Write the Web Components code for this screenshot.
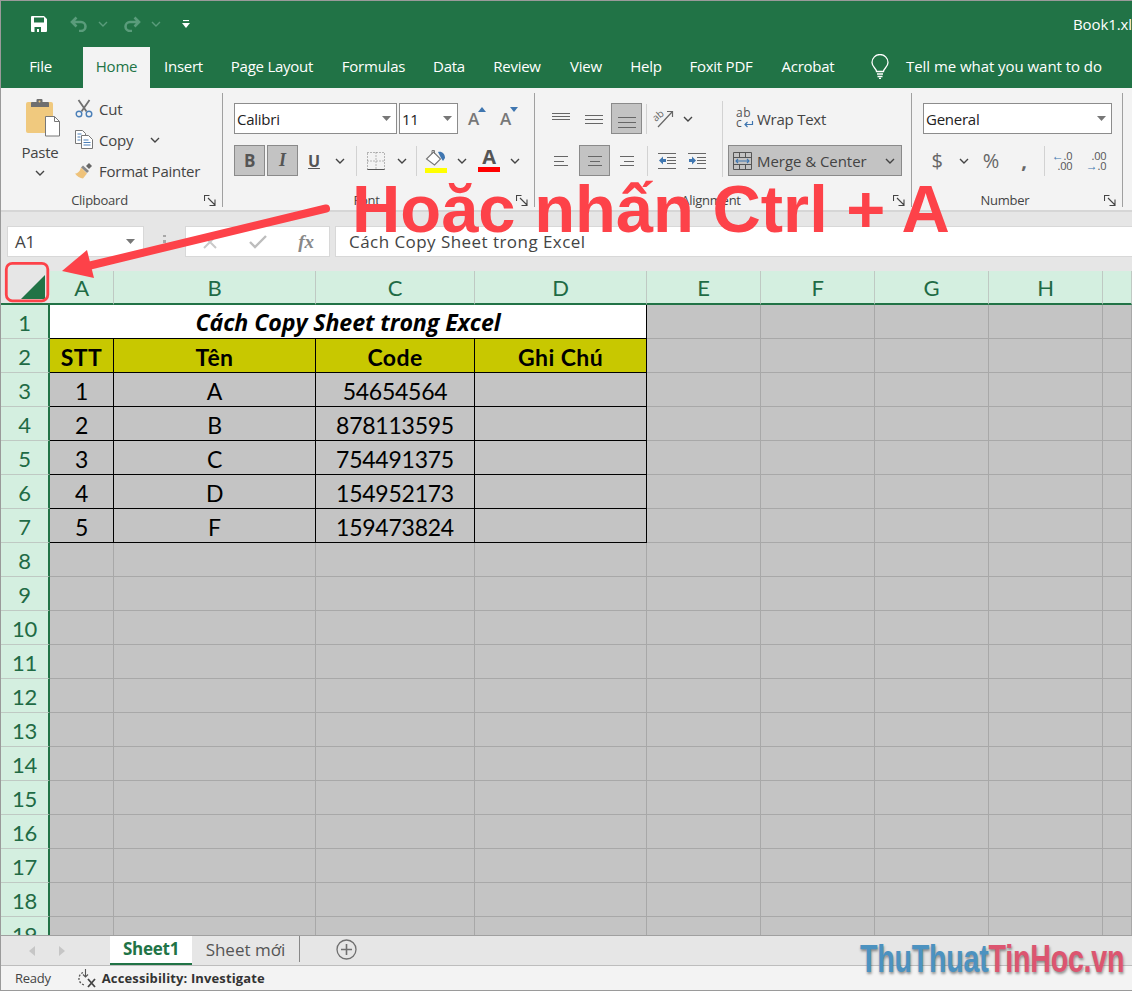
<!DOCTYPE html>
<html lang="vi"><head><meta charset="utf-8"><title>Book1</title>
<style>html,body{margin:0;padding:0;background:#f3f3f3}</style></head><body>
<x-app></x-app>
<script>
const chev=(c='#444')=>`<svg width="10" height="6" viewBox="0 0 10 6"><path d="M1 1l4 4 4-4" fill="none" stroke="${c}" stroke-width="1.4"/></svg>`;
const caret=`<svg width="9" height="5" viewBox="0 0 9 5"><path d="M0 0h9L4.500 5z" fill="#777"/></svg>`;
const launcher=`<svg width="12" height="11" viewBox="0 0 12 11"><path d="M.5 0v6M.5.5h5M4 3l7 7M11 4.500v6H5.500" fill="none" stroke="#444" stroke-width="1.1"/></svg>`;
const lines=(ys,x0,w)=>`<svg width="20" height="24" viewBox="0 0 20 24">${ys.map((y,i)=>`<path d="M${Array.isArray(x0)?x0[i]:x0} ${y}h${Array.isArray(w)?w[i]:w}" stroke="#666" stroke-width="1"/>`).join('')}</svg>`;
const I={
save:`<svg width="16" height="16" viewBox="0 0 16 16"><path fill="#fff" fill-rule="evenodd" d="M0 1a1 1 0 0 1 1-1h12l3 3v12a1 1 0 0 1-1 1H1a1 1 0 0 1-1-1zM3 1.500v5h10v-5zM3.500 11v5h2.500v-3h2v3h2v-5z"/></svg>`,
undo:`<svg width="18" height="16" viewBox="0 0 18 16"><path d="M6.500 1.500L2 6l4.500 4.500M2.500 6H11a4.500 4.500 0 0 1 0 9H9" fill="none" stroke="#5a9c7b" stroke-width="2.600"/></svg>`,
redo:`<svg width="18" height="16" viewBox="0 0 18 16"><path d="M11.500 1.500L16 6l-4.500 4.500M15.500 6H7a4.500 4.500 0 0 0 0 9h2" fill="none" stroke="#5a9c7b" stroke-width="2.600"/></svg>`,
custom:`<svg width="8" height="9" viewBox="0 0 8 9"><path d="M1 .5h6" stroke="#fff" stroke-width="1.200"/><path d="M0 3h8L4 8z" fill="#fff"/></svg>`,
bulb:`<svg width="18" height="25" viewBox="0 0 18 25"><path d="M5.500 17.500c0-3-4.500-4.500-4.500-9a8 8 0 0 1 16 0c0 4.500-4.500 6-4.500 9zM6 20h6M6.500 22.500h5M8 24.500h2" fill="none" stroke="#fff" stroke-width="1.300"/></svg>`,
paste:`<svg width="36" height="40" viewBox="0 0 36 40"><rect x="0" y="4" width="27" height="31" rx="2" fill="#f0c97e"/><path d="M5 9V5a1 1 0 0 1 1-1h4.500V2a1 1 0 0 1 1-1h4a1 1 0 0 1 1 1v2H22a1 1 0 0 1 1 1v4z" fill="#6f6f6f"/><circle cx="13.500" cy="3.500" r="1" fill="#f0c97e"/><path d="M19.500 18.500h9l5 5v14.500h-14z" fill="#fff" stroke="#777"/><path d="M28.500 18.500v5h5" fill="none" stroke="#777"/></svg>`,
cut:`<svg width="18" height="19" viewBox="0 0 18 19"><path d="M3.500 1l8 11.500M14.500 1l-8 11.500" stroke="#707070" stroke-width="1.800" fill="none"/><circle cx="4" cy="15" r="2.800" fill="none" stroke="#4a7fb8" stroke-width="1.400"/><circle cx="14" cy="15" r="2.800" fill="none" stroke="#4a7fb8" stroke-width="1.400"/></svg>`,
copy:`<svg width="18" height="19" viewBox="0 0 18 19"><path d="M.5.500h7l3 3v10H.5z" fill="#fff" stroke="#777"/><path d="M6.500 5.500h7l4 4v9h-11z" fill="#fff" stroke="#777"/><path d="M2.500 4h4M2.500 7h3M2.500 10h3M8.500 10h5M8.500 12.500h7M8.500 15h7" stroke="#4a7fb8"/></svg>`,
brush:`<svg width="18" height="17" viewBox="0 0 18 17"><path d="M11 4l3-3 3 3-3 3z" fill="#666"/><path d="M8 3.500l6 5.500-2 2-6-5.500z" fill="#888"/><path d="M6 5.500l6 6-4 5c-3-.5-6-2-8-5 3 0 5-2.500 6-6z" fill="#eec27a"/></svg>`,
borders:`<svg width="18" height="18" viewBox="0 0 18 18"><path d="M.5.500h17v17H.5zM9 .500v17M.5 9h17" fill="none" stroke="#777" stroke-dasharray="1 2"/><path d="M.5 17.500h17" stroke="#555"/></svg>`,
fill:`<svg width="22" height="21" viewBox="0 0 22 21"><path d="M1.500 10l7-7 7 7-6 6z" fill="#fff" stroke="#777" stroke-width="1.100"/><path d="M7 5V1.500h2.500V5" fill="none" stroke="#777"/><path d="M13 3c4-1 7 2 7 6l-2 3-2-3" fill="#3f76b0"/></svg>`,
orient:`<svg width="21" height="21" viewBox="0 0 21 21" style="overflow:visible"><text x="1" y="11" font-size="10" fill="#666" font-family="Open Sans,sans-serif" transform="rotate(-40 6 10)">ab</text><path d="M5 19L19 4M14 3.500h5.500v5.500" fill="none" stroke="#666" stroke-width="1.200"/></svg>`,
wrap:`<svg width="18" height="22" viewBox="0 0 18 22"><path d="M16.500 13v3.500H9M11.500 14L9 16.500l2.500 2.500" fill="none" stroke="#3f76b0" stroke-width="1.200"/></svg>`,
indL:`<svg width="18" height="17" viewBox="0 0 18 17"><path d="M0 1.500h18M0 16.500h18M9 5.500h9M9 8.500h9M9 11.500h9" stroke="#666"/><path d="M1 8.500l4-4v2.500h3v3H5v2.500z" fill="#3f76b0"/></svg>`,
indR:`<svg width="18" height="17" viewBox="0 0 18 17"><path d="M0 1.500h18M0 16.500h18M9 5.500h9M9 8.500h9M9 11.500h9" stroke="#666"/><path d="M8 8.500l-4-4v2.500H1v3h3v2.500z" fill="#3f76b0"/></svg>`,
merge:`<svg width="19" height="18" viewBox="0 0 19 18"><path d="M.5.500h18v17H.5zM.5 5.500h18M.5 12.500h18M6.500.500v5M12.500.500v5M6.500 12.500v5M12.500 12.500v5" fill="none" stroke="#555"/><path d="M3 9h13M5 7l-2 2 2 2M14 7l2 2-2 2" fill="none" stroke="#3f76b0" stroke-width="1.100"/></svg>`,
x:`<svg width="14" height="14" viewBox="0 0 14 14"><path d="M1 1l12 12M13 1L1 13" stroke="#c9c9c9" stroke-width="2"/></svg>`,
check:`<svg width="18" height="14" viewBox="0 0 18 14"><path d="M1 7l5 5L17 1" fill="none" stroke="#bdbdbd" stroke-width="2.400"/></svg>`,
};

function comp(name,css,html){
  customElements.define(name,class extends HTMLElement{
    constructor(){super();const r=this.attachShadow({mode:'open'});
      r.innerHTML=`<style>${css}</style>`+(typeof html==='function'?html(this):html);}
  });
}

comp('x-ib',`:host{display:inline-flex;align-items:center;justify-content:center;box-sizing:border-box;width:var(--w,32px);height:31px;flex:none;color:#555;font-size:15px}
:host([on]){background:#c3c3c3;border:1px solid #8a8a8a}`,`<slot></slot>`);
comp('x-sep',`:host{display:block;width:1px;height:30px;flex:none;background:#d2d2d2;margin:0 var(--mr,0) 0 var(--ml,3px);align-self:center}`,``);
comp('x-combo',`:host{display:flex;align-items:center;box-sizing:border-box;height:31px;flex:none;width:var(--w);background:#fff;border:1px solid #8c8c8c;padding:0 5px 0 2px;font-size:15px;color:#222}
span{flex:1;white-space:nowrap}`,`<span><slot></slot></span>${caret}`);
comp('x-row',`:host{display:flex;align-items:center;height:31px}`,`<slot></slot>`);
comp('x-group',`:host{display:flex;flex-direction:column;flex:none;box-sizing:border-box;width:var(--gw);height:114px;border-right:1px solid #a0a0a0;padding-top:10px}
.body{flex:1;display:flex;min-height:0;padding-left:var(--pl,11px)}
.lab{display:flex;height:14px;align-items:center;font-size:13px;color:#444}
.t{flex:1;text-align:center;white-space:nowrap}
.l{width:24px;display:flex;justify-content:center}`,
 h=>`<div class="body"><slot></slot></div><div class="lab"><div class="t">${h.getAttribute('label')}</div><div class="l">${launcher}</div></div>`);

comp('x-titlebar',`:host{display:flex;align-items:center;height:46px;background:#217346;color:#fff;flex:none;padding-left:30px;box-sizing:border-box}
.i{display:flex;flex:none}
.t{margin-left:auto;font-size:15px;white-space:nowrap;width:59px;overflow:hidden;letter-spacing:-.1px}`,
`<span class="i">${I.save}</span><span class="i" style="margin-left:23px">${I.undo}</span><span class="i" style="margin-left:10px">${chev('#5a9c7b')}</span><span class="i" style="margin-left:15px">${I.redo}</span><span class="i" style="margin-left:10px">${chev('#5a9c7b')}</span><span class="i" style="margin-left:21px">${I.custom}</span><span class="t">Book1.xlsx</span>`);

comp('x-tab',`:host{display:flex;align-items:center;justify-content:center;flex:none;box-sizing:border-box;width:var(--w);height:41px;padding-bottom:3px;font-size:15px;color:#fff;white-space:nowrap}
:host([on]){background:#f3f3f3;color:#217346}`,`<slot></slot>`);
comp('x-tabs',`:host{display:flex;height:41px;flex:none;background:#217346;padding-left:15px;align-items:center}
.b{display:flex;margin-left:21px;flex:none;margin-bottom:2px}.t{margin-left:17px;color:#fff;font-size:15px;white-space:nowrap;letter-spacing:-.05px;padding-bottom:3px}.g{width:18px;flex:none}`,
`<x-tab style="--w:49px">File</x-tab><div class="g"></div><x-tab on style="--w:67px">Home</x-tab><x-tab style="--w:67px">Insert</x-tab><x-tab style="--w:110px">Page Layout</x-tab><x-tab style="--w:93px">Formulas</x-tab><x-tab style="--w:58px">Data</x-tab><x-tab style="--w:78px">Review</x-tab><x-tab style="--w:60px">View</x-tab><x-tab style="--w:60px">Help</x-tab><x-tab style="--w:90px">Foxit PDF</x-tab><x-tab style="--w:84px">Acrobat</x-tab><span class="b">${I.bulb}</span><span class="t">Tell me what you want to do</span>`);

comp('x-ribbon',`:host{display:flex;flex:none;height:124px;box-sizing:border-box;background:#f3f3f3;border-bottom:2px solid #d6d6d6;padding-top:5px;color:#444;font-size:15px}
.col{display:flex;flex-direction:column;gap:11px}
.paste{display:flex;flex-direction:column;align-items:center;width:48px;margin-left:4px;margin-top:-5px;flex:none}
.paste>svg{margin-left:8px}
.paste .w{font-size:15px;color:#444;line-height:20px;margin-top:4px}
.paste .c{margin-top:8px;display:flex}
.small{margin-left:11px;margin-top:-10px;display:flex;flex-direction:column;flex:none}
.sm{height:31px;display:flex;align-items:center;white-space:nowrap}
.sm .ic{width:24px;display:flex;flex:none}
.sm .ex{margin-left:17px;display:flex}
b.B{font:700 17px "Open Sans",sans-serif;color:#555}
i.I{font:italic 700 18px "Liberation Serif",serif;color:#555}
u.U{font:700 16px "Open Sans",sans-serif;color:#555}
.A{font:600 17px "Open Sans",sans-serif;color:#777;display:inline-flex}
.tri{display:block;margin:0 0 0 -1px}
.colA{display:flex;flex-direction:column;align-items:center}
.colA span{font:700 20px/20px "Open Sans",sans-serif;color:#555;margin-top:-2px}
.colA em{display:block;width:22px;height:5px;background:#f00}
.colA em.y{background:#ff0;margin-top:-2px}
.wrap{display:flex;align-items:center;height:31px;padding-left:8px;white-space:nowrap}
.wt{margin-left:-1px}
.abc{font:12px/10px "Open Sans",sans-serif;color:#555;width:22px;flex:none;position:relative;display:block;height:22px}
.abc i{font-style:normal;display:block;letter-spacing:.5px}
.mg{display:flex;align-items:center;width:174px;height:31px;box-sizing:border-box;background:#c3c3c3;border:1px solid #8a8a8a;padding:0 6px 0 4px;white-space:nowrap;color:#444}
.mg .tx{margin-left:5px;flex:1;letter-spacing:-.05px}
.vs{width:1px;height:76px;background:#d2d2d2;margin:-2px 5px 0 0;flex:none}
.dec{font:11px/10px "Open Sans",sans-serif;color:#555;text-align:right;display:block}
.dec s{text-decoration:none;color:#3f76b0;font-weight:700;font-size:12px}
.sym{font-size:20px;color:#666}
`,
`<x-group label="Clipboard" style="--gw:222px;--pl:11px">
  <div class="paste">${I.paste}<span class="w">Paste</span><span class="c">${chev()}</span></div>
  <div class="small">
    <div class="sm"><span class="ic">${I.cut}</span>Cut</div>
    <div class="sm"><span class="ic">${I.copy}</span>Copy<span class="ex">${chev()}</span></div>
    <div class="sm"><span class="ic">${I.brush}</span>Format Painter</div>
  </div>
</x-group>
<x-group label="Font" style="--gw:312px;--pl:11px">
  <div class="col">
    <x-row><x-combo style="--w:163px">Calibri</x-combo><x-combo style="--w:59px;margin-left:2px">11</x-combo>
      <x-ib style="--w:32px;margin-left:3px"><span class="A">A<svg class="tri" width="8" height="5" viewBox="0 0 8 5"><path d="M4 0l4 5H0z" fill="#3f76b0"/></svg></span></x-ib>
      <x-ib style="--w:32px"><span class="A">A<svg class="tri" width="8" height="5" viewBox="0 0 8 5"><path d="M0 0h8L4 5z" fill="#3f76b0"/></svg></span></x-ib></x-row>
    <x-row><x-ib on style="--w:31px"><b class="B">B</b></x-ib><x-ib on style="--w:31px;margin-left:2px"><i class="I">I</i></x-ib>
      <x-ib><u class="U">U</u></x-ib><x-ib style="--w:20px">${chev()}</x-ib><x-sep style="--ml:6px"></x-sep>
      <x-ib style="--w:37px">${I.borders}</x-ib><x-ib style="--w:16px">${chev()}</x-ib><x-sep style="--ml:6px"></x-sep>
      <x-ib style="--w:38px"><span class="colA">${I.fill}<em class="y"></em></span></x-ib><x-ib style="--w:14px">${chev()}</x-ib>
      <x-ib style="--w:40px"><span class="colA"><span>A</span><em></em></span></x-ib><x-ib style="--w:12px">${chev()}</x-ib></x-row>
  </div>
</x-group>
<x-group label="Alignment" style="--gw:377px;--pl:10px">
  <div class="col" style="width:177px;flex:none">
    <x-row><x-ib>${lines([6.5,9.5,12.5],1,18)}</x-ib><x-ib style="--w:34px">${lines([8.5,12.5,16.5],1,18)}</x-ib><x-ib on style="--w:31px">${lines([10.5,15.5,20.5],1,18)}</x-ib>
      <x-sep style="--ml:4px"></x-sep><x-ib style="--w:32px">${I.orient}</x-ib><x-ib style="--w:18px">${chev()}</x-ib></x-row>
    <x-row><x-ib>${lines([7.5,12.5,16.5],[3,3,3],[14,10,14])}</x-ib><x-ib on style="--w:31px;margin-left:2px">${lines([7.5,12.5,16.5],[3,5,3],[14,10,14])}</x-ib><x-ib style="--w:34px">${lines([7.5,12.5,16.5],[3,7,3],[14,10,14])}</x-ib>
      <x-sep style="--ml:3px"></x-sep><x-ib style="--w:38px">${I.indL}</x-ib><x-ib style="--w:22px">${I.indR}</x-ib></x-row>
  </div>
  <div class="vs"></div>
  <div class="col" style="flex:none">
    <div class="wrap"><span class="abc"><i>ab</i><i>c</i><span style="position:absolute;left:0;top:0">${I.wrap}</span></span><span class="wt">Wrap Text</span></div>
    <div class="mg">${I.merge}<span class="tx">Merge &amp; Center</span>${chev()}</div>
  </div>
</x-group>
<x-group label="Number" style="--gw:211px;--pl:11px">
  <div class="col">
    <x-row><x-combo style="--w:189px">General</x-combo></x-row>
    <x-row><x-ib style="--w:28px"><span class="sym">$</span></x-ib><x-ib style="--w:26px">${chev()}</x-ib><x-ib style="--w:28px"><span class="sym">%</span></x-ib><x-ib style="--w:38px"><span class="sym"><b>,</b></span></x-ib>
      <x-sep style="--ml:1px"></x-sep>
      <x-ib style="--w:34px"><span class="dec"><s>←</s>.0<br>.00</span></x-ib><x-ib style="--w:34px"><span class="dec">.00<br><s>→</s>.0</span></x-ib></x-row>
  </div>
</x-group>`);

comp('x-formula',`:host{display:flex;flex:none;height:59px;background:#e6e6e6;padding:14px 0 0 6px;box-sizing:border-box;align-items:flex-start;font-size:17px;color:#444}
.n{display:flex;align-items:center;box-sizing:border-box;width:137px;height:31px;background:#fff;border:1px solid #d8d8d8;padding:0 8px 0 7px;flex:none;color:#444}
.n span{flex:1}
.d{width:41px;flex:none;height:31px;display:flex;flex-direction:column;align-items:center;justify-content:center;gap:3px}
.d i{width:2.500px;height:2.500px;background:#a8a8a8;display:block}
.b{display:flex;align-items:center;box-sizing:border-box;width:145px;height:31px;background:#fff;border:1px solid #d8d8d8;flex:none}
.b span{display:flex;justify-content:center;width:48px;flex:none}
.f{font:italic 700 19px "Liberation Serif",serif;color:#888}
.v{flex:1;height:31px;background:#fff;border:1px solid #d8d8d8;border-right:0;margin-left:5px;box-sizing:border-box;padding-left:13px;display:flex;align-items:center;color:#444;white-space:nowrap;letter-spacing:.45px}`,
`<div class="n"><span>A1</span>${caret}</div><div class="d"><i></i><i></i><i></i></div>
<div class="b"><span>${I.x}</span><span>${I.check}</span><span class="f">fx</span></div><div class="v">Cách Copy Sheet trong Excel</div>`);

const COLS=['A','B','C','D','E','F','G','H',''];
const DATA={3:['1','A','54654564'],4:['2','B','878113595'],5:['3','C','754491375'],6:['4','D','154952173'],7:['5','F','159473824']};
comp('x-sheet',`:host{display:block;flex:1;min-height:0;overflow:hidden;font-family:Lato,sans-serif;background:#c4c4c4}
.g{display:grid;grid-template-columns:49px 64px 202px 159px 172px 114px 114px 114px 114px 1fr;grid-auto-rows:34px}
.g>div{box-sizing:border-box;display:flex;align-items:center;justify-content:center;min-width:0;white-space:nowrap}
.all{background:#e6e6e6;border-bottom:2px solid #217346;align-items:flex-end!important;justify-content:flex-end!important;padding:0 5px 4px 0}
.ch{background:#d4efe0;color:#1f6b45;font-size:22px;border-right:1px solid #bfc9c3;border-bottom:2px solid #217346;padding-top:1px}
.rh{background:#d4efe0;color:#1f6b45;font-size:22px;border-bottom:1px solid #bfc9c3;border-right:2px solid #217346;padding-top:1px}
.c{border-right:1px solid #a8a8a8;border-bottom:1px solid #a8a8a8;font-size:23px;color:#000;padding-top:2px}
.t{border-right-color:#000;border-bottom-color:#000}
.m{grid-column:span 4;background:#fff;font:italic 700 23.200px "Open Sans",sans-serif;letter-spacing:-.1px;padding-top:0}
.h{background:#c8c800;font-weight:700;letter-spacing:.4px}`,
()=>{let s='<div class="g"><div class="all"><svg width="24" height="24" viewBox="0 0 24 24"><path d="M24 0v24H0z" fill="#217346"/></svg></div>';
 COLS.forEach(c=>s+=`<div class="ch">${c}</div>`);
 const H=['STT','Tên','Code','Ghi Chú'];
 for(let r=1;r<=19;r++){
  s+=`<div class="rh">${r}</div>`;
  if(r===1){s+=`<div class="c t m">Cách Copy Sheet trong Excel</div>`;for(let i=0;i<5;i++)s+='<div class="c"></div>';continue;}
  for(let i=0;i<9;i++){
    if(i<4&&r<=7){
      const txt=r===2?H[i]:(DATA[r][i]||'');
      s+=`<div class="c t${r===2?' h':''}">${txt}</div>`;
    } else s+='<div class="c"></div>';
  }
 }
 return s+'</div>';});

comp('x-sheettabs',`:host{display:flex;align-items:flex-start;flex:none;height:31px;box-sizing:border-box;background:#e6e6e6;border-top:1px solid #a0a0a0;border-bottom:1px solid #bdbdbd;font-size:17px}
.nav{display:flex;width:109px;flex:none;height:29px;align-items:center}
.nav svg{flex:none}
.on{width:82px;height:29px;box-sizing:border-box;background:#fff;border-bottom:2px solid #217346;color:#217346;font-weight:700;display:flex;justify-content:center;align-items:center;flex:none;padding-bottom:3px}
.o{width:108px;flex:none;color:#555;height:26px;display:flex;justify-content:center;align-items:center;box-sizing:border-box;border-right:1px solid #888;white-space:nowrap;letter-spacing:0}
.p{margin-left:36px;display:flex;flex:none;margin-top:3px}`,
`<div class="nav"><svg style="margin-left:28px" width="6" height="10" viewBox="0 0 6 10"><path d="M6 0v10L0 5z" fill="#c6c6c6"/></svg><svg style="margin-left:24px" width="6" height="10" viewBox="0 0 6 10"><path d="M0 0v10l6-5z" fill="#c6c6c6"/></svg></div>
<div class="on">Sheet1</div><div class="o">Sheet mới</div>
<span class="p"><svg width="21" height="21" viewBox="0 0 21 21"><circle cx="10.500" cy="10.500" r="9.500" fill="none" stroke="#707070" stroke-width="1.300"/><path d="M10.500 5v11M5 10.500h11" stroke="#707070" stroke-width="1.600"/></svg></span>`);
comp('x-status',`:host{display:flex;align-items:center;flex:none;height:24px;box-sizing:border-box;background:#f3f3f3;padding-left:14px;font-size:13px;color:#444}
.i{display:flex;margin-left:26px;flex:none}b{margin-left:5px;color:#333;font-family:"Open Sans",sans-serif;letter-spacing:.13px;font-size:13px}`,
`<span>Ready</span><span class="i"><svg width="20" height="19" viewBox="0 0 20 19"><path d="M6 3.500a6.500 6.500 0 0 0 2 12.500" fill="none" stroke="#555" stroke-dasharray="2 1.500" stroke-width="1.300"/><path d="M8.500 0v8M6 5.500l2.500 2.500L11 5.500" fill="none" stroke="#555" stroke-width="1.100"/><path d="M11 10l7 8M18 10l-7 8" stroke="#444" stroke-width="1.800"/></svg></span><b>Accessibility: Investigate</b>`);

comp('x-annot',`:host{position:absolute;inset:-1px;display:block;pointer-events:none}
svg{position:absolute;left:0;top:0}
.t{position:absolute;left:352px;top:171px;font:700 66.900px/76px "Liberation Sans",sans-serif;color:#fd4249;white-space:nowrap;letter-spacing:0}
.wm{position:absolute;left:860px;top:936px;font:700 38px/46px "Liberation Sans",sans-serif;white-space:nowrap;transform-origin:0 50%;transform:scaleX(.753);text-shadow:1px 2px 3px rgba(0,0,0,.4);letter-spacing:-.3px}
.wm .a{color:#4c92c0}.wm .b{color:#dc5570}`,
`<svg width="1132" height="991" viewBox="0 0 1132 991"><rect x="6.300" y="263.300" width="41.500" height="37.500" rx="6" fill="none" stroke="#fd4249" stroke-width="2.800"/><path d="M326 208.500L88 266" stroke="#fd4249" stroke-width="8" stroke-linecap="round" fill="none"/><path d="M62 271L87 250L94 278z" fill="#fd4249"/></svg>
<div class="t">Hoăc nhấn Ctrl + A</div><div class="wm"><span class="a">ThuThuat</span><span class="b">TinHoc.vn</span></div>`);

comp('x-app',`:host{display:flex;flex-direction:column;position:relative;box-sizing:border-box;width:1132px;height:991px;overflow:hidden;border:1px solid #9a9a9a;border-right:0;font-family:"Open Sans",sans-serif;background:#f3f3f3;letter-spacing:-.25px}`,
`<x-titlebar></x-titlebar><x-tabs></x-tabs><x-ribbon></x-ribbon><x-formula></x-formula><x-sheet></x-sheet><x-sheettabs></x-sheettabs><x-status></x-status><x-annot></x-annot>`);
</script></body></html>
